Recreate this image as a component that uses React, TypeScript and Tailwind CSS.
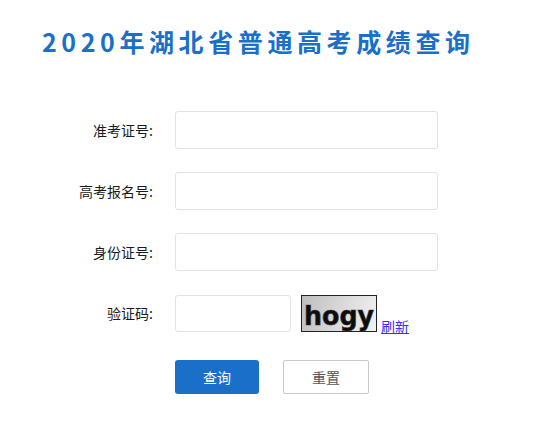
import React from "react";

const font = { fontFamily: '"Noto Sans CJK SC", "Noto Sans", sans-serif' };

function Row({ label, children }: { label: string; children: React.ReactNode }) {
  return (
    <div className="flex items-center h-[38px]">
      <div className="w-[153px] text-right text-[14px] text-[#1a1a1a] leading-none">{label}</div>
      <div className="ml-[22px] flex items-end">{children}</div>
    </div>
  );
}

export default function App() {
  return (
    <div className="w-[545px] h-[435px] bg-white" style={font}>
      <div className="pt-[23px] pl-[42px]">
        <h1 className="text-[25px] leading-[36px] font-bold text-[#1a6fc9] tracking-[4.6px]">
          2020年湖北省普通高考成绩查询
        </h1>
      </div>
      <div className="mt-[52px] flex flex-col gap-[23px]">
        <Row label="准考证号:">
          <input className="w-[263px] h-[38px] border border-[#e2e2e2] rounded-[3px] outline-none" />
        </Row>
        <Row label="高考报名号:">
          <input className="w-[263px] h-[38px] border border-[#e2e2e2] rounded-[3px] outline-none" />
        </Row>
        <Row label="身份证号:">
          <input className="w-[263px] h-[38px] border border-[#e2e2e2] rounded-[3px] outline-none" />
        </Row>
        <Row label="验证码:">
          <input className="w-[116px] h-[37px] border border-[#e2e2e2] rounded-[3px] outline-none" />
          <div className="ml-[10px] w-[76px] h-[37px] border border-[#222] overflow-hidden bg-[linear-gradient(110deg,#bdbdbd_0%,#d6d6d6_45%,#f2f2f2_100%)]">
            <svg width="74" height="35" viewBox="0 0 74 35">
              <text
                x="2"
                y="29"
                fontFamily="'DejaVu Sans', sans-serif"
                fontWeight="bold"
                fontSize="27"
                fill="#0d0d0d"
                stroke="#333"
                strokeWidth="0.6"
                textLength="70"
                lengthAdjust="spacingAndGlyphs"
              >
                hogy
              </text>
            </svg>
          </div>
          <a href="#" className="ml-[4px] text-[14px] leading-none text-[#3b2cff] underline mb-[-1px]">
            刷新
          </a>
        </Row>
      </div>
      <div className="mt-[28px] ml-[175px] flex gap-[24px]">
        <button className="w-[84px] h-[34px] bg-[#1a6fc9] text-white text-[14px] rounded-[3px]">查询</button>
        <button className="w-[86px] h-[34px] bg-white border border-[#c8c8c8] text-[#555] text-[14px] rounded-[2px]">重置</button>
      </div>
    </div>
  );
}
